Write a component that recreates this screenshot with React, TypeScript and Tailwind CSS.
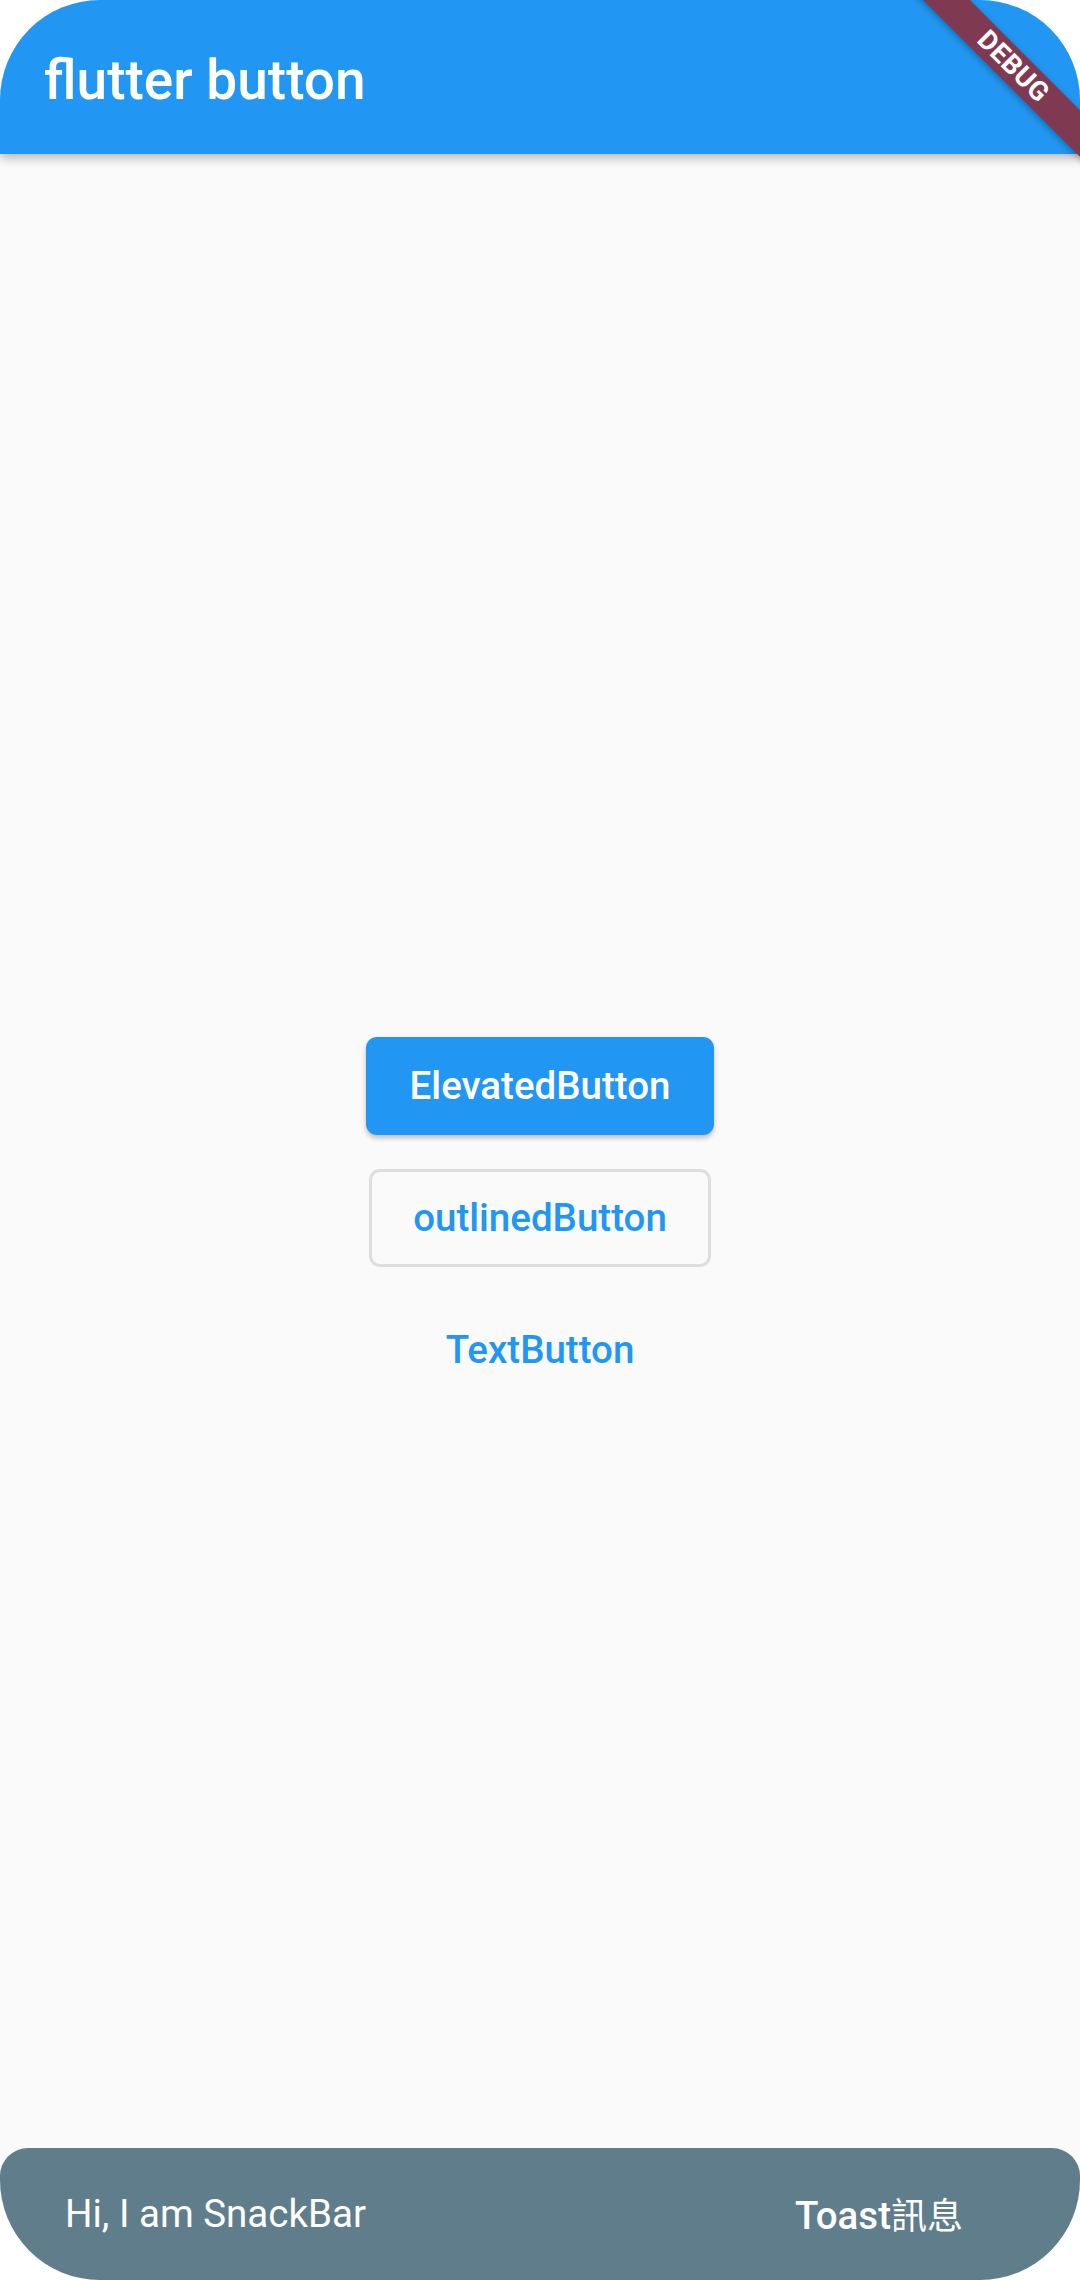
import React from 'react';

const font = { fontFamily: 'Roboto, "Noto Sans CJK TC", sans-serif' };

export default function App() {
  return (
    <div className="w-[1080px] h-[2280px] bg-white" style={font}>
      <div className="relative w-[1080px] h-[2280px] rounded-[100px] overflow-hidden bg-[#fafafa] flex flex-col">
        {/* app bar */}
        <header className="relative z-10 h-[154px] shrink-0 bg-[#2196F3] flex items-center pl-[44px] pt-[6px] shadow-[0_4px_10px_rgba(0,0,0,0.28)]">
          <h1 className="text-[55px] font-medium text-white leading-none">flutter button</h1>
        </header>

        {/* body */}
        <main className="flex-1 flex flex-col items-center justify-center gap-[34px] pt-[1px]">
          <button className="w-[348px] h-[98px] rounded-[11px] bg-[#2196F3] text-white text-[38.5px] font-medium flex items-center justify-center shadow-[0_3px_5px_rgba(0,0,0,0.25)]">
            ElevatedButton
          </button>
          <button className="w-[342px] h-[98px] rounded-[11px] border-[3px] border-[#dedede] text-[#2196F3] text-[38.5px] font-medium flex items-center justify-center">
            outlinedButton
          </button>
          <button className="h-[98px] px-[22px] text-[#2196F3] text-[38.5px] font-medium flex items-center justify-center">
            TextButton
          </button>
        </main>

        {/* snackbar */}
        <div className="absolute left-0 right-0 bottom-0 h-[132px] rounded-t-[28px] bg-[#607D8B] flex items-center justify-between pl-[65px] pr-[117px]">
          <span className="text-white text-[38.5px]">Hi, I am SnackBar</span>
          <span className="text-white text-[38.5px] font-medium pt-[4px]">
            Toast<span className="font-normal text-[36px]">訊息</span>
          </span>
        </div>

        {/* debug banner */}
        <div className="absolute left-[893px] top-[50px] w-[240px] h-[33px] rotate-45 bg-[#7f3a52] flex items-center justify-center shadow-[0_2px_6px_rgba(0,0,0,0.3)] z-20">
          <span className="text-white text-[27px] font-bold leading-none tracking-[0.5px]">DEBUG</span>
        </div>
      </div>
    </div>
  );
}
